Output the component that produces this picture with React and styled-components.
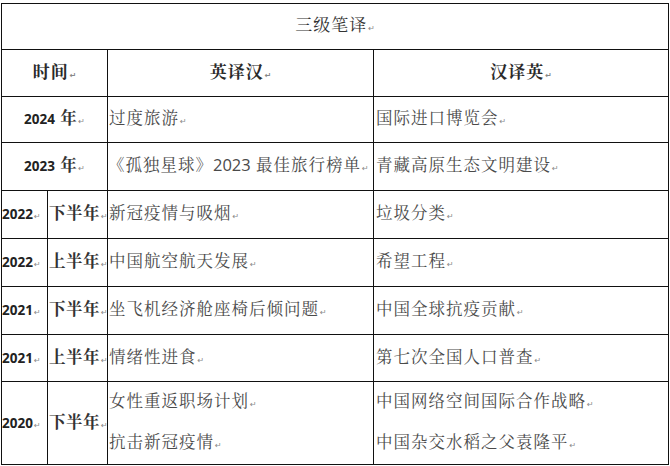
import React from 'react';
import styled, { createGlobalStyle } from 'styled-components';

const GlobalStyle = createGlobalStyle`
  html, body {
    margin: 0;
    padding: 0;
    background: #ffffff;
  }
  body {
    font-family: "Noto Serif CJK SC", "Noto Sans CJK SC", serif;
  }
`;

const Page = styled.div`
  padding: 3px 0 0 1px;
  width: 670px;
  box-sizing: border-box;
`;

const Table = styled.table`
  border-collapse: collapse;
  table-layout: fixed;
  width: 667px;
`;

const Cell = styled.td`
  border: 1.6px solid #111;
  padding: 0 0 0 ${(p) => (p.$pad ? p.$pad : 0)}px;
  height: ${(p) => p.$h}px;
  text-align: ${(p) => (p.$center ? 'center' : 'left')};
  vertical-align: middle;
  font-size: 16.5px;
  line-height: 22px;
  letter-spacing: 1px;
  color: #4a4a4a;
  white-space: nowrap;
  overflow: hidden;
`;

const Head = styled(Cell)`
  font-weight: 700;
  color: #2a2a2a;
  font-size: 17px;
`;

const Title = styled(Head)`
  font-weight: 400;
  color: #333;
`;

const Year = styled.span`
  font-family: "Open Sans", "DejaVu Sans", sans-serif;
  font-weight: 700;
  font-size: 13.5px;
  letter-spacing: 0;
  color: #222;
`;

const Half = styled.span`
  font-weight: 700;
  color: #333;
  letter-spacing: 0.5px;
`;

const Latin = styled.span`
  font-family: "Open Sans", sans-serif;
  letter-spacing: 0;
`;

const Mark = styled.span`
  font-family: "DejaVu Sans", sans-serif;
  font-size: 8px;
  color: #888;
  letter-spacing: 0;
  margin-left: 1px;
`;

const Para = styled.div`
  line-height: 37px;
`;

const halfRows = [
  { year: '2022', half: '下半年', en: ['新冠疫情与吸烟'], zh: ['垃圾分类'], h: 47 },
  { year: '2022', half: '上半年', en: ['中国航空航天发展'], zh: ['希望工程'], h: 47 },
  { year: '2021', half: '下半年', en: ['坐飞机经济舱座椅后倾问题'], zh: ['中国全球抗疫贡献'], h: 47 },
  { year: '2021', half: '上半年', en: ['情绪性进食'], zh: ['第七次全国人口普查'], h: 46 },
  {
    year: '2020',
    half: '下半年',
    en: ['女性重返职场计划', '抗击新冠疫情'],
    zh: ['中国网络空间国际合作战略', '中国杂交水稻之父袁隆平'],
    h: 82,
  },
];

const Lines = ({ items }) =>
  items.length === 1 ? (
    <>
      {items[0]}
      <Mark>↵</Mark>
    </>
  ) : (
    items.map((t) => (
      <Para key={t}>
        {t}
        <Mark>↵</Mark>
      </Para>
    ))
  );

const HalfRow = ({ r }) => (
  <tr>
    <Cell $h={r.h}>
      <Year>{r.year}</Year>
      <Mark>↵</Mark>
    </Cell>
    <Cell $h={r.h} $pad={1}>
      <Half>{r.half}</Half>
      <Mark>↵</Mark>
    </Cell>
    <Cell $h={r.h} $pad={1}>
      <Lines items={r.en} />
    </Cell>
    <Cell $h={r.h} $pad={2}>
      <Lines items={r.zh} />
    </Cell>
  </tr>
);

export default function App() {
  return (
    <Page>
      <GlobalStyle />
      <Table>
        <colgroup>
          <col style={{ width: 46 }} />
          <col style={{ width: 60 }} />
          <col style={{ width: 266 }} />
          <col style={{ width: 295 }} />
        </colgroup>
        <tbody>
          <tr>
            <Title colSpan={4} $h={45} $center>
              三级笔译<Mark>↵</Mark>
            </Title>
          </tr>
          <tr>
            <Head colSpan={2} $h={46} $center>
              时间<Mark>↵</Mark>
            </Head>
            <Head $h={46} $center>
              英译汉<Mark>↵</Mark>
            </Head>
            <Head $h={46} $center>
              汉译英<Mark>↵</Mark>
            </Head>
          </tr>
          <tr>
            <Cell colSpan={2} $h={45} $center>
              <Year>2024</Year> <Half>年</Half>
              <Mark>↵</Mark>
            </Cell>
            <Cell $h={45} $pad={1}>
              过度旅游<Mark>↵</Mark>
            </Cell>
            <Cell $h={45} $pad={2}>
              国际进口博览会<Mark>↵</Mark>
            </Cell>
          </tr>
          <tr>
            <Cell colSpan={2} $h={47} $center>
              <Year>2023</Year> <Half>年</Half>
              <Mark>↵</Mark>
            </Cell>
            <Cell $h={47} $pad={0}>
              《孤独星球》<Latin>2023</Latin> 最佳旅行榜单<Mark>↵</Mark>
            </Cell>
            <Cell $h={47} $pad={2}>
              青藏高原生态文明建设<Mark>↵</Mark>
            </Cell>
          </tr>
          {halfRows.map((r, i) => (
            <HalfRow key={i} r={r} />
          ))}
        </tbody>
      </Table>
    </Page>
  );
}
